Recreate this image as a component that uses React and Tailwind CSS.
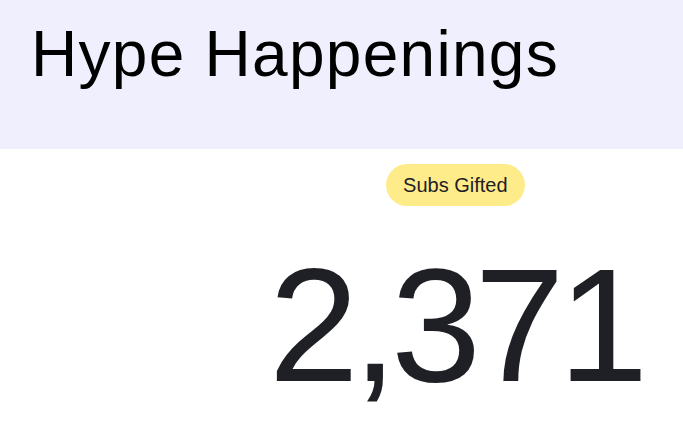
export default function App() {
  return (
    <div className="w-[683px] h-[437px] bg-white overflow-hidden">
      <div className="h-[149px] bg-[#efeffd] pl-[31px] pt-[22px]">
        <h1 className="text-[64px] leading-none tracking-[0.02em] text-black font-['Liberation_Sans',sans-serif]">
          Hype Happenings
        </h1>
      </div>
      <div className="flex">
        <div className="w-1/3" />
        <div className="flex-1 flex flex-col items-center pt-[15px]">
          <span className="h-[42px] px-[17px] flex items-center rounded-full bg-[#feec8a] text-[20px] text-[#1f2026] font-['Liberation_Sans',sans-serif]">
            Subs Gifted
          </span>
          <div className="mt-[38px] text-[162px] leading-none tracking-[-0.04em] text-[#1f2026] font-['Liberation_Sans',sans-serif]">
            2,371
          </div>
        </div>
      </div>
    </div>
  );
}
